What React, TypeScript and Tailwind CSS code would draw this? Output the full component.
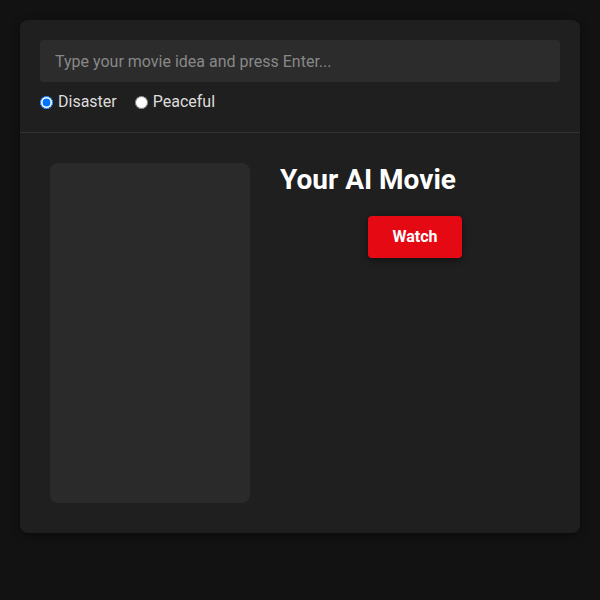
import React from "react";

export default function App() {
  return (
    <div className="min-h-[600px] w-full bg-[#121212] p-5" style={{ fontFamily: "Roboto, 'Liberation Sans', sans-serif" }}>
      <div className="overflow-hidden rounded-lg bg-[#1f1f1f] shadow-[0_2px_8px_rgba(0,0,0,0.4)]">
        <div className="flex flex-col gap-2.5 border-b border-[#333] p-5">
          <input
            type="text"
            placeholder="Type your movie idea and press Enter..."
            className="h-[42px] w-full rounded bg-[#2c2c2c] px-[15px] text-base text-white placeholder:text-[#888] outline-none"
          />
          <div className="flex items-center gap-[18px] text-base leading-5 text-[#ddd]">
            <label className="flex items-center gap-[5px]">
              <input type="radio" name="mode" defaultChecked className="m-0 h-[13px] w-[13px]" />
              Disaster
            </label>
            <label className="flex items-center gap-[5px]">
              <input type="radio" name="mode" className="m-0 h-[13px] w-[13px]" />
              Peaceful
            </label>
          </div>
        </div>
        <div className="flex gap-[30px] p-[30px]">
          <div className="h-[340px] w-[200px] shrink-0 rounded-lg bg-[#2a2a2a]" />
          <div className="flex flex-1 flex-col">
            <h2 className="text-[28px] font-bold leading-[1.2] text-white">Your AI Movie</h2>
            <button className="mt-[19px] self-center rounded bg-[#e50914] px-6 py-3 text-base font-bold leading-[18px] text-white shadow-[0_2px_6px_rgba(0,0,0,0.5)]">
              Watch
            </button>
          </div>
        </div>
      </div>
    </div>
  );
}
